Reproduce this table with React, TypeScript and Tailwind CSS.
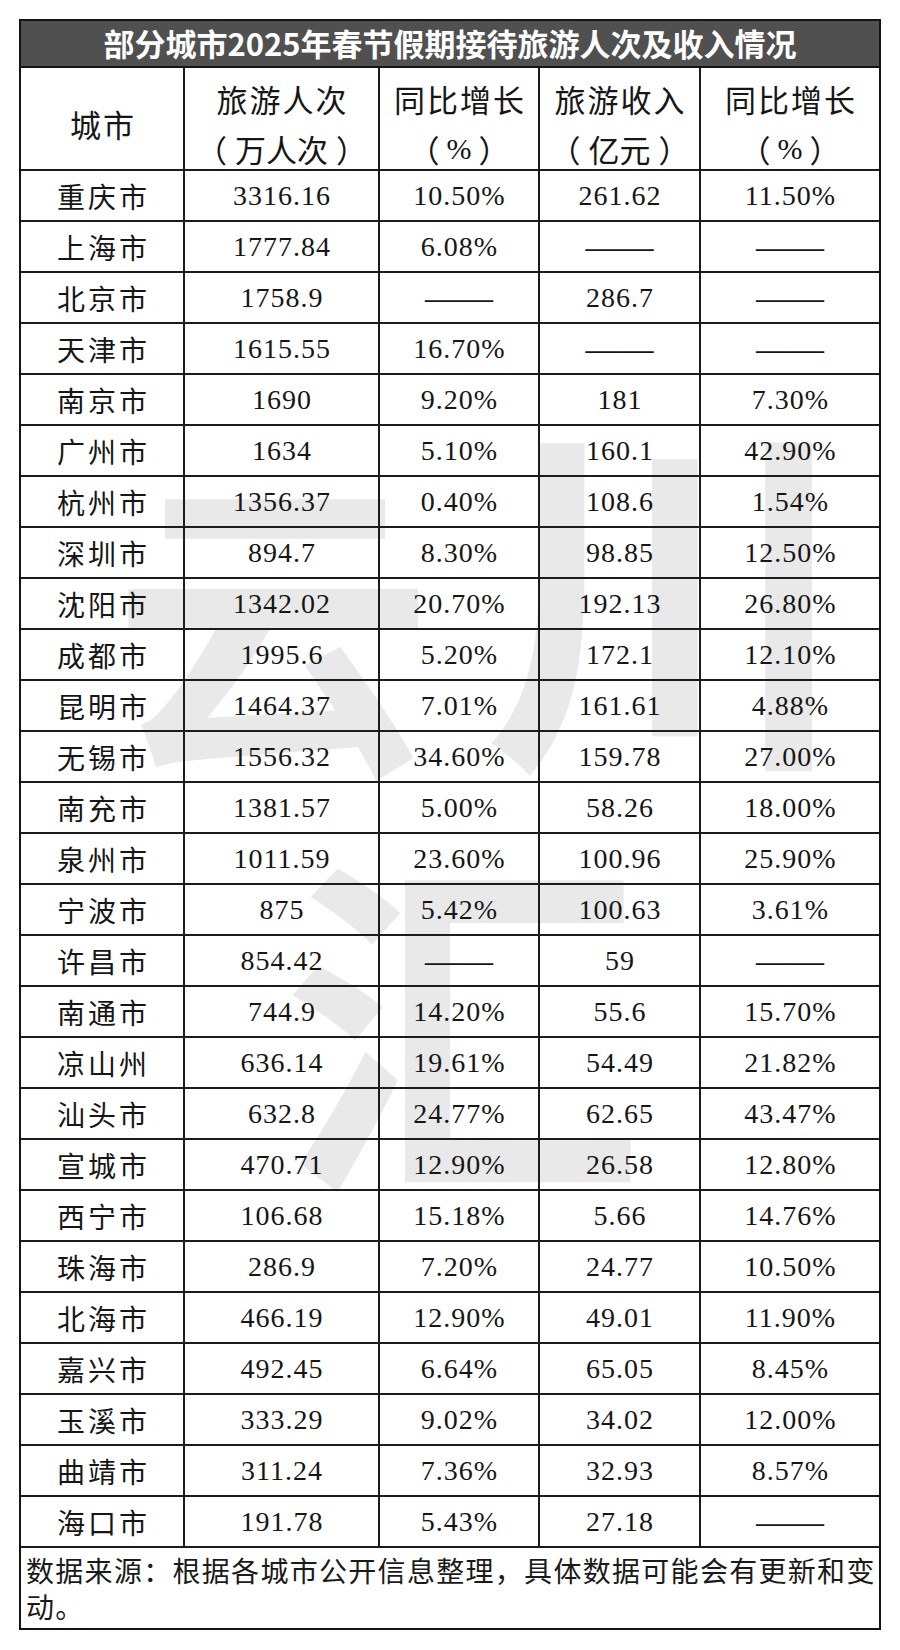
const rows: [string, string, string, string, string][] = [
  ['重庆市', '3316.16', '10.50%', '261.62', '11.50%'],
  ['上海市', '1777.84', '6.08%', '-', '-'],
  ['北京市', '1758.9', '-', '286.7', '-'],
  ['天津市', '1615.55', '16.70%', '-', '-'],
  ['南京市', '1690', '9.20%', '181', '7.30%'],
  ['广州市', '1634', '5.10%', '160.1', '42.90%'],
  ['杭州市', '1356.37', '0.40%', '108.6', '1.54%'],
  ['深圳市', '894.7', '8.30%', '98.85', '12.50%'],
  ['沈阳市', '1342.02', '20.70%', '192.13', '26.80%'],
  ['成都市', '1995.6', '5.20%', '172.1', '12.10%'],
  ['昆明市', '1464.37', '7.01%', '161.61', '4.88%'],
  ['无锡市', '1556.32', '34.60%', '159.78', '27.00%'],
  ['南充市', '1381.57', '5.00%', '58.26', '18.00%'],
  ['泉州市', '1011.59', '23.60%', '100.96', '25.90%'],
  ['宁波市', '875', '5.42%', '100.63', '3.61%'],
  ['许昌市', '854.42', '-', '59', '-'],
  ['南通市', '744.9', '14.20%', '55.6', '15.70%'],
  ['凉山州', '636.14', '19.61%', '54.49', '21.82%'],
  ['汕头市', '632.8', '24.77%', '62.65', '43.47%'],
  ['宣城市', '470.71', '12.90%', '26.58', '12.80%'],
  ['西宁市', '106.68', '15.18%', '5.66', '14.76%'],
  ['珠海市', '286.9', '7.20%', '24.77', '10.50%'],
  ['北海市', '466.19', '12.90%', '49.01', '11.90%'],
  ['嘉兴市', '492.45', '6.64%', '65.05', '8.45%'],
  ['玉溪市', '333.29', '9.02%', '34.02', '12.00%'],
  ['曲靖市', '311.24', '7.36%', '32.93', '8.57%'],
  ['海口市', '191.78', '5.43%', '27.18', '-'],
]

const cjk = "font-['Noto_Sans_CJK_SC',sans-serif]"
const serif = "font-['Liberation_Serif','Noto_Sans_CJK_SC',serif]"
const grid = 'grid grid-cols-[164px_195px_160px_161px_1fr]'
const cell = 'flex items-center justify-center border-r-2 border-[#1c1c1c]'

function Value({ v }: { v: string }) {
  if (v === '-') {
    return <span className={`${serif} text-[34px] leading-none`}>——</span>
  }
  return <span className={`${serif} text-[28px] tracking-[1px] pl-[1px]`}>{v}</span>
}

// second header line: full-width brackets round a unit, set wide like the print
function Unit({ u }: { u: string }) {
  const pct = u === '%'
  return (
    <div className={`flex items-center text-[31px] leading-[50px] ${pct ? 'gap-[7px]' : 'gap-[8px]'}`}>
      <span>（</span>
      {pct ? <span className={`${serif} text-[30px]`}>%</span> : <span>{u}</span>}
      <span>）</span>
    </div>
  )
}

function HeadCell({ top, unit, last }: { top: string; unit: string; last?: boolean }) {
  return (
    <div
      className={`flex flex-col items-center justify-center pt-[6px] ${
        last ? '' : 'border-r-2 border-[#1c1c1c]'
      }`}
    >
      <div className="text-[31px] leading-[50px] tracking-[2px] pl-[2px]">{top}</div>
      <Unit u={unit} />
    </div>
  )
}

export default function App() {
  return (
    <div className="min-h-[1650px] bg-white pt-[19px] pl-[19px] text-[#161616]">
      <div className={`${cjk} relative isolate w-[862px] border-2 border-[#141414] bg-white`}>
        {/* faint watermark behind the rows */}
        <div
          aria-hidden
          className="pointer-events-none absolute inset-0 -z-10 select-none overflow-hidden font-bold text-[#e9e9e9]"
        >
          <span className="absolute left-[92px] top-[430px] text-[320px] leading-none">云</span>
          <span className="absolute left-[462px] top-[372px] text-[370px] leading-none">川</span>
          <span className="absolute left-[262px] top-[808px] text-[360px] leading-none">汇</span>
        </div>

        <div className="flex h-[47px] items-center justify-center border-b-2 border-[#141414] bg-[#505050] text-[31px] font-bold text-white">
          部分城市2025年春节假期接待旅游人次及收入情况
        </div>

        <div className={`${grid} h-[103px] border-b-2 border-[#1c1c1c]`}>
          <div className={`${cell} pt-[6px]`}>
            <span className="text-[31px] tracking-[2px] pl-[2px]">城市</span>
          </div>
          <HeadCell top="旅游人次" unit="万人次" />
          <HeadCell top="同比增长" unit="%" />
          <HeadCell top="旅游收入" unit="亿元" />
          <HeadCell top="同比增长" unit="%" last />
        </div>

        {rows.map(([city, visits, vGrowth, income, iGrowth]) => (
          <div key={city} className={`${grid} relative h-[51px] border-b-2 border-[#1c1c1c]`}>
            <div className={cell}>
              <span className="text-[28px] tracking-[3px] pl-[3px]">{city}</span>
            </div>
            <div className={cell}>
              <Value v={visits} />
            </div>
            <div className={cell}>
              <Value v={vGrowth} />
            </div>
            <div className={cell}>
              <Value v={income} />
            </div>
            <div className="flex items-center justify-center">
              <Value v={iGrowth} />
            </div>
          </div>
        ))}

        <div className="relative h-[80px] pl-[5px] pt-[4px] text-[28px] leading-[36px] tracking-[1.3px] text-[#1a1a1a]">
          <div className="whitespace-nowrap">数据来源：根据各城市公开信息整理，具体数据可能会有更新和变</div>
          <div>动。</div>
        </div>
      </div>
    </div>
  )
}
